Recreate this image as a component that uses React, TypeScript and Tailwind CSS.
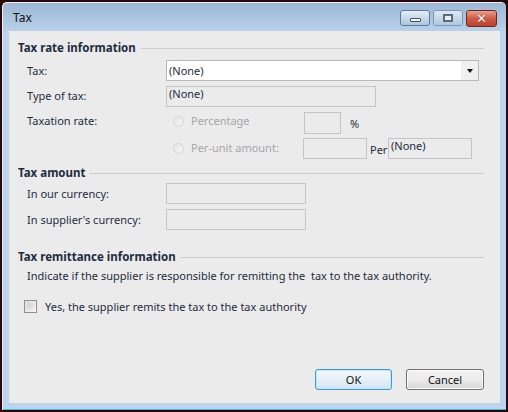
import React from 'react';

const font = { fontFamily: '"Noto Sans", "Open Sans", sans-serif' };

const Heading: React.FC<{ text: string; className?: string }> = ({ text, className = '' }) => (
  <div className={`flex items-center h-[16px] pl-[9px] pr-[16px] ${className}`}>
    <span className="font-bold text-[11.5px] text-[#1e2c40] whitespace-nowrap">{text}</span>
    <div className="flex-1 h-px bg-[#cbcbcb] ml-[5px]" />
  </div>
);

const Radio: React.FC = () => (
  <span className="w-[11px] h-[11px] rounded-full border border-[#d6d6d6] bg-gradient-to-br from-[#e6e6e6] to-[#f4f4f4] inline-block" />
);

const Box: React.FC<{ className?: string; children?: React.ReactNode }> = ({ className = '', children }) => (
  <div className={`h-[21px] border border-[#c4c4c4] text-[11px] text-[#1e2c40] flex items-center px-[2px] leading-none ${className}`}>
    {children}
  </div>
);

export default function App() {
  return (
    <div
      style={font}
      className="w-[508px] h-[412px] bg-[#2a0808] p-[2px] flex flex-col select-none"
    >
      <div className="flex-1 flex flex-col bg-[#bcd4ec] border-l border-t border-[#e4eef8] rounded-t-[5px]">
        {/* title bar */}
        <div className="h-[28px] flex items-center pl-[10px] pr-[9px] bg-gradient-to-b from-[#9db8d5] to-[#b8d0e9] rounded-t-[5px]">
          <span className="text-[12px] text-[#111] flex-1 pt-[2px]">Tax</span>
          <div className="flex gap-[3px] mt-[3px]">
            <div className="w-[30px] h-[16px] rounded-[3px] border border-[#5d7a9b] bg-gradient-to-b from-[#e4edf7] via-[#c8d8ea] to-[#aec5df] flex items-end justify-center pb-[3px]">
              <span className="w-[11px] h-[4px] bg-white border border-[#3d4f66] rounded-[1px]" />
            </div>
            <div className="w-[30px] h-[16px] rounded-[3px] border border-[#7e97b3] bg-gradient-to-b from-[#dfe9f5] via-[#c8d8ea] to-[#b1c7df] flex items-center justify-center">
              <span className="w-[10px] h-[8px] border-2 border-[#5a6b80] bg-[#e8eef5]" />
            </div>
            <div className="w-[31px] h-[17px] rounded-[3px] border border-[#6b2a20] bg-gradient-to-b from-[#e8a08e] via-[#cf5c46] to-[#c0402a] flex items-center justify-center">
              <span className="text-white font-bold text-[13px] leading-none" style={{ fontFamily: '"DejaVu Sans", sans-serif', textShadow: '0 0 1px #4a1a12' }}>✕</span>
            </div>
          </div>
        </div>

        {/* client area */}
        <div className="mx-[6px] h-[372px] bg-[#ebebeb] flex flex-col text-[11px] text-[#1e2c40] pt-[9px]">
          <Heading text="Tax rate information" />

          <div className="flex pl-[18px] mt-[4px]">
            <span className="w-[139px] pt-[3px]">Tax:</span>
            <div className="w-[313px] h-[21px] border border-[#b9b9b9] bg-white flex">
              <span className="flex-1 pl-[2px] leading-[19px]">(None)</span>
              <span className="w-[17px] bg-[#f0f0f0] flex items-center justify-center">
                <span className="w-0 h-0 border-l-[3.5px] border-r-[3.5px] border-t-[4px] border-l-transparent border-r-transparent border-t-[#111]" />
              </span>
            </div>
          </div>

          <div className="flex pl-[18px] mt-[5px]">
            <span className="w-[139px] pt-[2px]">Type of tax:</span>
            <Box className="w-[210px] items-start pt-[1px]">(None)</Box>
          </div>

          <div className="flex pl-[18px] mt-[5px]">
            <span className="w-[146px] pt-[1px]">Taxation rate:</span>
            <div className="flex flex-col">
              <div className="flex items-start">
                <span className="pt-[3px]"><Radio /></span>
                <span className="w-[120px] pl-[7px] text-[#a6a6a6] pt-[1px]">Percentage</span>
                <Box className="w-[37px] h-[22px]" />
                <span className="ml-[9px] pt-[4px] text-[11px]">%</span>
              </div>
              <div className="flex items-start mt-[4px]">
                <span className="pt-[4px]"><Radio /></span>
                <span className="w-[119px] pl-[7px] text-[#a6a6a6] pt-[2px]">Per-unit amount:</span>
                <Box className="w-[64px]" />
                <span className="ml-[3px] w-[18px] pt-[4px]">Per</span>
                <Box className="w-[84px] items-start pt-[1px]">(None)</Box>
              </div>
            </div>
          </div>

          <Heading text="Tax amount" className="mt-[6px]" />
          <div className="flex pl-[18px] mt-[2px]">
            <span className="w-[139px] pt-[3px]">In our currency:</span>
            <Box className="w-[140px]" />
          </div>
          <div className="flex pl-[18px] mt-[5px]">
            <span className="w-[139px] pt-[3px]">In supplier's currency:</span>
            <Box className="w-[140px]" />
          </div>

          <Heading text="Tax remittance information" className="mt-[19px]" />
          <div className="pl-[18px] mt-[3px]">
            Indicate if the supplier is responsible for remitting the&nbsp; tax to the tax authority.
          </div>

          <div className="flex items-center pl-[15px] mt-[14px]">
            <span className="w-[13px] h-[13px] border border-[#8f8f8f] bg-gradient-to-br from-[#dcdcdc] to-[#f6f6f6] p-[2px]">
              <span className="block w-full h-full bg-gradient-to-br from-[#d0d0d0] to-[#ececec]" />
            </span>
            <span className="ml-[8px]">Yes, the supplier remits the tax to the tax authority</span>
          </div>

          <div className="flex-1" />
          <div className="flex justify-end gap-[14px] pr-[16px] pb-[13px]">
            <button className="w-[77px] h-[21px] rounded-[3px] border border-[#3c9ad6] bg-gradient-to-b from-[#f4f9fc] via-[#e6f0f7] to-[#d3e3ee] text-[11px] text-[#111] leading-none shadow-[inset_0_0_0_1px_#c6e6f8]">
              OK
            </button>
            <button className="w-[78px] h-[21px] rounded-[3px] border border-[#707070] bg-gradient-to-b from-[#f2f2f2] via-[#ebebeb] to-[#d6d6d6] text-[11px] text-[#111] leading-none shadow-[inset_0_0_0_1px_#fbfbfb]">
              Cancel
            </button>
          </div>
        </div>
        <div className="flex-1" />
        <div className="h-px bg-[#39b8e6]" />
      </div>
    </div>
  );
}
